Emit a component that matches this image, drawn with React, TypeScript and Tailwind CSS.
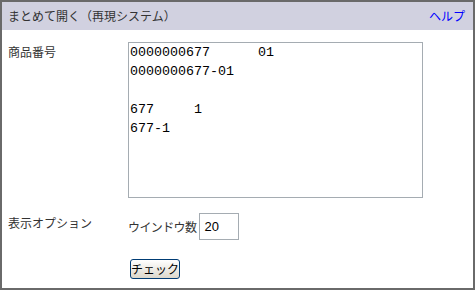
import React from 'react'

const jp = { fontFamily: '"Noto Sans CJK JP", "Liberation Sans", sans-serif' }

const App = () => {
  const numbers = '0000000677\t01\n0000000677-01\n\n677\t1\n677-1'

  return (
    <div
      className="w-[475px] h-[290px] border-2 border-[#6a6a6a] bg-white flex flex-col text-[#333]"
      style={jp}
    >
      <div className="h-[28px] bg-[#d1d1e0] flex items-center justify-between pl-[6px] pr-[8px] text-[12px]">
        <span>まとめて開く（再現システム）</span>
        <a href="#" className="text-[#0000ff]">ヘルプ</a>
      </div>

      {/* form */}
      <div className="flex flex-col pl-[6px] pt-[12px] text-[12px]">
        <div className="flex">
          <div className="w-[120px] pt-[1px]">商品番号</div>
          <textarea
            readOnly
            value={numbers}
            className="w-[295px] h-[156px] border border-[#a5acb2] pl-[1px] pt-0 resize-none overflow-hidden text-[13.33px] leading-[19px] text-black outline-none [tab-size:8]"
            style={{ fontFamily: '"Liberation Mono", monospace' }}
          />
        </div>

        <div className="flex mt-[15px]">
          <div className="w-[120px] pt-[1px]">表示オプション</div>
          <div className="flex items-center gap-[3px]">
            <span className="tracking-[-0.6px]">ウインドウ数</span>
            <input
              readOnly
              value="20"
              className="w-[40px] h-[27px] border border-[#a5acb2] px-[4px] text-[13px] text-black outline-none"
              style={{ fontFamily: '"Liberation Sans", sans-serif' }}
            />
          </div>
        </div>

        <div className="flex mt-[19px] pl-[122px]">
          <button className="w-[50px] h-[20px] rounded-[3px] border border-[#003c74] bg-gradient-to-b from-white to-[#dcd8cc] text-[12px] text-black leading-none">
            チェック
          </button>
        </div>
      </div>
    </div>
  )
}

export default App
